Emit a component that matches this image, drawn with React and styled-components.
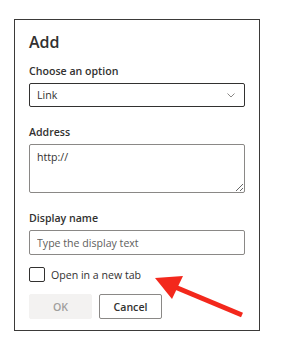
import React from 'react';
import styled, { createGlobalStyle } from 'styled-components';

const GlobalStyle = createGlobalStyle`
    html, body {
        margin: 0;
        padding: 0;
        background: #ffffff;
    }
    body {
        font-family: "Open Sans", "Noto Sans", sans-serif;
        color: #323130;
    }
`;

const Page = styled.div`
    position: relative;
    width: 290px;
    height: 351px;
    padding: 19px 0 0 14px;
    box-sizing: border-box;
`;

const Dialog = styled.div`
    width: 246px;
    box-sizing: border-box;
    border: 1px solid #3b3a39;
    padding: 11px 14px 11px 14px;
    display: flex;
    flex-direction: column;
`;

const Title = styled.h1`
    margin: 0 0 10px 0;
    font-size: 16px;
    line-height: 22px;
    font-weight: 600;
    color: #323130;
`;

const Field = styled.div`
    display: flex;
    flex-direction: column;
    margin-bottom: ${props => props.last ? '12px' : '17px'};
`;

const Label = styled.label`
    font-size: 10.6px;
    line-height: 16px;
    font-weight: 600;
    color: #323130;
    margin-bottom: 4px;
`;

const Select = styled.div`
    height: 24px;
    box-sizing: border-box;
    border: 1px solid #323130;
    border-radius: 2px;
    display: flex;
    align-items: center;
    justify-content: space-between;
    padding: 0 9px 0 7px;
    font-size: 10.6px;
    color: #323130;
`;

const TextArea = styled.textarea`
    height: 49px;
    box-sizing: border-box;
    border: 1px solid #8a8886;
    border-radius: 2px;
    padding: 5px 7px;
    font-family: inherit;
    font-size: 10.6px;
    color: #323130;
    resize: vertical;
    outline: none;
`;

const Input = styled.input`
    height: 25px;
    box-sizing: border-box;
    border: 1px solid #8a8886;
    border-radius: 2px;
    padding: 0 7px;
    font-family: inherit;
    font-size: 10.6px;
    color: #323130;
    outline: none;

    &::placeholder {
        color: #605e5c;
    }
`;

const CheckRow = styled.label`
    display: flex;
    align-items: center;
    gap: 6px;
    font-size: 10.6px;
    color: #323130;
    margin-bottom: 12px;
`;

const Box = styled.span`
    width: 16px;
    height: 15px;
    box-sizing: border-box;
    border: 1px solid #323130;
    border-radius: 2px;
`;

const Buttons = styled.div`
    display: flex;
    gap: 7px;
`;

const Button = styled.button`
    width: 63px;
    height: 25px;
    box-sizing: border-box;
    border-radius: 2px;
    font-family: inherit;
    font-size: 10.6px;
    font-weight: 600;
    padding: 0;
    border: 1px solid ${props => props.disabled ? '#f3f2f1' : '#8a8886'};
    background: ${props => props.disabled ? '#f3f2f1' : '#ffffff'};
    color: ${props => props.disabled ? '#a19f9d' : '#323130'};
`;

const Arrow = styled.svg`
    position: absolute;
    left: 0;
    top: 0;
    pointer-events: none;
`;

const Chevron = () => (
    <svg width="8" height="5" viewBox="0 0 8 5">
        <path d="M0.5 0.5 L4 4 L7.5 0.5" fill="none" stroke="#8a8886" strokeWidth="1" />
    </svg>
);

export default function App() {
    return (
        <Page>
            <GlobalStyle />
            <Dialog>
                <Title>Add</Title>
                <Field>
                    <Label>Choose an option</Label>
                    <Select>
                        <span>Link</span>
                        <Chevron />
                    </Select>
                </Field>
                <Field>
                    <Label>Address</Label>
                    <TextArea defaultValue="http://" />
                </Field>
                <Field last>
                    <Label>Display name</Label>
                    <Input placeholder="Type the display text" />
                </Field>
                <CheckRow>
                    <Box />
                    Open in a new tab
                </CheckRow>
                <Buttons>
                    <Button disabled>OK</Button>
                    <Button>Cancel</Button>
                </Buttons>
            </Dialog>
            <Arrow width="290" height="351" viewBox="0 0 290 351">
                <line x1="242" y1="315" x2="175" y2="287" stroke="#f3281c" strokeWidth="5" />
                <polygon points="155,278 183,276 172,299" fill="#f3281c" />
            </Arrow>
        </Page>
    );
}
